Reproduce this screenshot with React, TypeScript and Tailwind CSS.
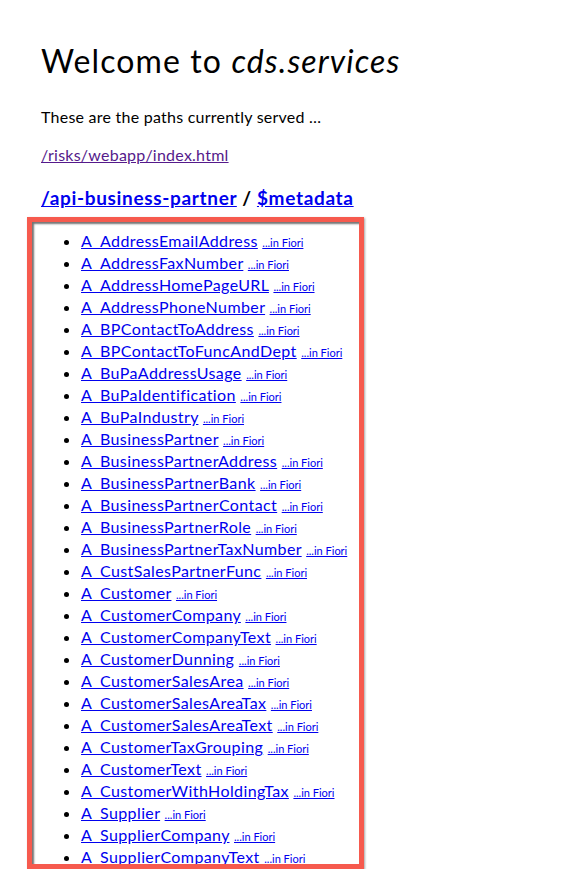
const entities = [
  'A_AddressEmailAddress',
  'A_AddressFaxNumber',
  'A_AddressHomePageURL',
  'A_AddressPhoneNumber',
  'A_BPContactToAddress',
  'A_BPContactToFuncAndDept',
  'A_BuPaAddressUsage',
  'A_BuPaIdentification',
  'A_BuPaIndustry',
  'A_BusinessPartner',
  'A_BusinessPartnerAddress',
  'A_BusinessPartnerBank',
  'A_BusinessPartnerContact',
  'A_BusinessPartnerRole',
  'A_BusinessPartnerTaxNumber',
  'A_CustSalesPartnerFunc',
  'A_Customer',
  'A_CustomerCompany',
  'A_CustomerCompanyText',
  'A_CustomerDunning',
  'A_CustomerSalesArea',
  'A_CustomerSalesAreaTax',
  'A_CustomerSalesAreaText',
  'A_CustomerTaxGrouping',
  'A_CustomerText',
  'A_CustomerWithHoldingTax',
  'A_Supplier',
  'A_SupplierCompany',
  'A_SupplierCompanyText',
  'A_SupplierPurchasingOrg',
];

export default function App() {
  return (
    <div className="min-h-[869px] bg-white pl-[41px] text-black font-['Lato','Liberation_Sans',sans-serif]">
      {/* Title */}
      <h1 className="pt-[41px] text-[32px] leading-[40px] font-normal tracking-[0.035em]">
        Welcome to <i>cds.services</i>
      </h1>

      <p className="mt-[24px] text-[16px] leading-[24px] tracking-[0.015em]">These are the paths currently served …</p>

      <p className="mt-[14px] text-[16px] leading-[24px] tracking-[0.015em]">
        <a href="#" className="text-[#551a8b] underline">/risks/webapp/index.html</a>
      </p>

      <h3 className="mt-[19px] text-[19px] leading-[24px] font-bold tracking-[0.035em]">
        <a href="#" className="text-[#0000ee] underline">/api-business-partner</a>
        {' / '}
        <a href="#" className="text-[#0000ee] underline">$metadata</a>
      </h3>

      {/* Highlighted service list */}
      <div className="-ml-[14px] mt-[7px] w-[337px] border-[5px] border-[#f65a4e] shadow-[1px_1px_2px_rgba(0,0,0,0.35)]">
        <div className="h-[642px] overflow-hidden shadow-[inset_2px_2px_2px_rgba(0,0,0,0.55)]">
          <ul className="list-disc pl-[49px] pt-[8px]">
            {entities.map((name) => (
              <li key={name} className="text-[16px] leading-[22px] tracking-[0.025em]">
                <a href="#" className="text-[#0000ee] underline">{name}</a>{' '}
                <a href="#" className="text-[11px] leading-none tracking-normal text-[#0000ee] underline">...in Fiori</a>
              </li>
            ))}
          </ul>
        </div>
      </div>
    </div>
  );
}
